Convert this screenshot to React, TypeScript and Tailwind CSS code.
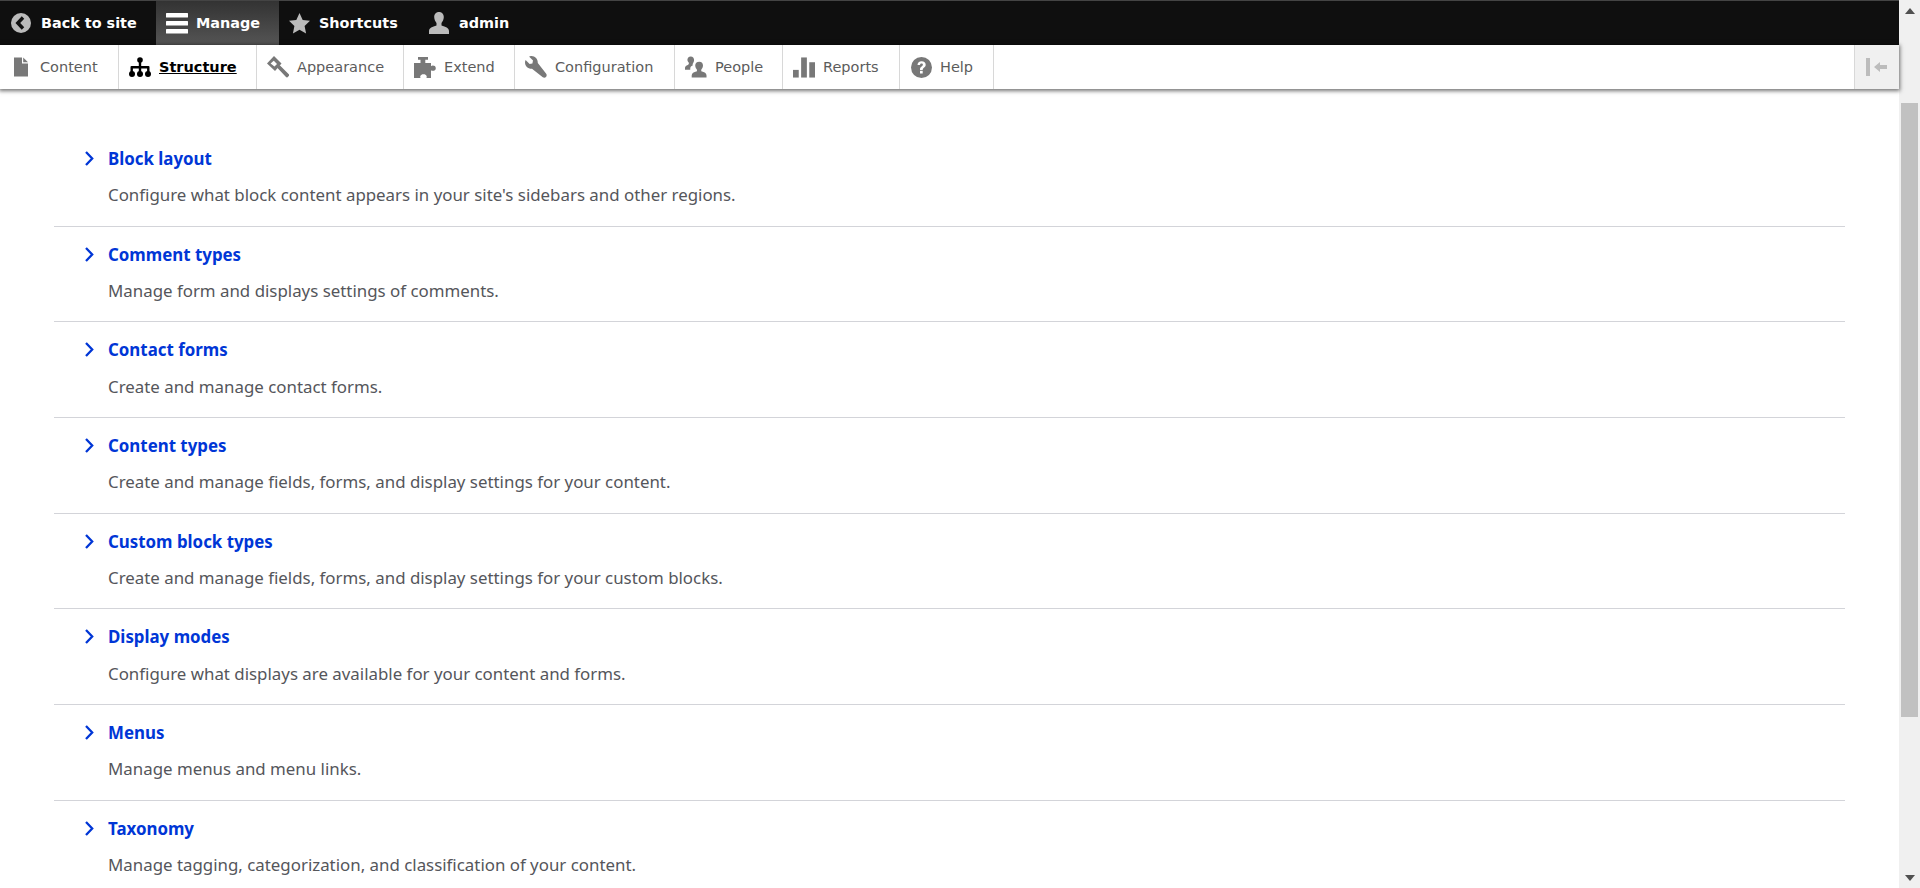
const nav = [
  { label: "Content", w: "w-[119px]", icon: "content" },
  { label: "Structure", w: "w-[138px]", icon: "structure", active: true },
  { label: "Appearance", w: "w-[147px]", icon: "appearance" },
  { label: "Extend", w: "w-[111px]", icon: "extend" },
  { label: "Configuration", w: "w-[160px]", icon: "configuration" },
  { label: "People", w: "w-[108px]", icon: "people" },
  { label: "Reports", w: "w-[117px]", icon: "reports" },
  { label: "Help", w: "w-[94px]", icon: "help" },
];

function Icon({ name, color }: { name: string; color: string }) {
  switch (name) {
    case "content":
      return (
        <svg width="22" height="20" viewBox="0 0 22 20" fill={color}>
          <path d="M4 0.500h8v6h6v13H4z" />
          <path d="M13.200 0.500 18 5.300h-4.800z" />
        </svg>
      );
    case "structure":
      return (
        <svg width="22" height="21" viewBox="0 0 22 21" fill={color}>
          <circle cx="11" cy="3" r="2.800" />
          <path d="M9.800 5h2.400v4h7.300a1 1 0 0 1 1 1v5h-2.400v-3.600h-5.900V15H9.800v-3.600H3.900V15H1.500v-5a1 1 0 0 1 1-1h7.300z" />
          <circle cx="3" cy="17" r="3" />
          <circle cx="11" cy="17" r="3" />
          <circle cx="19" cy="17" r="3" />
        </svg>
      );
    case "appearance":
      return (
        <svg width="22" height="22" viewBox="0 0 22 22" fill={color}>
          <path d="M7 0l7.500 7.500L8 15 0 7.500z" />
          <path d="M6.800 4.800 10 8 7.500 10.500 3.600 7.400z" fill="#fff" />
          <path d="M10 11.500l2.500-2.500 9.300 9.300c.5.500.5 1 .2 1.500l-1.500 1.500c-.5.300-1 .3-1.500-.2z" />
        </svg>
      );
    case "extend":
      return (
        <svg width="22" height="21" viewBox="0 0 22 21" fill={color}>
          <path d="M4 0h10v2.800h-2.700V6H17v3.200c1-1 4.800-1 4.800 2s-3.800 3-4.800 2V21h-4.600c.8-1.200.4-3.800-2.900-3.800S5.800 19.800 6.600 21H0V6h6.500V2.800H4z" />
        </svg>
      );
    case "configuration":
      return (
        <svg width="22" height="22" viewBox="0 0 22 22" fill={color}>
          <path d="M6.500 0c-1 0-2 .3-2.500.6l4 4-.6 2.800-2.800.6-4-4C.2 4.700 0 5.500 0 6.500 0 10 3 13 7 12.800l10.800 8.400c1 .7 2.300.6 3.200-.2.800-.9.900-2.200.2-3.200L12.800 7C13 3 10 0 6.500 0z" />
        </svg>
      );
    case "people":
      return (
        <svg width="23" height="22" viewBox="0 0 23 22" fill={color}>
          <path d="M6 0c2.200 0 3.500 1.700 3.500 3.800 0 1.800-1 3.200-1.500 4v1.700c-1.500.5-2.500 1.500-2.500 3v1.500H0v-2c0-1.500 1-2.500 3-3.200l1-1V6.500C3 5.500 2.500 4.700 2.500 3.800 2.500 1.700 3.800 0 6 0z" />
          <path d="M15 5.500c2.400 0 3.800 1.800 3.800 4 0 2-1 3.300-1.800 4.300v1.700c3.500 1 5.500 2 5.500 4.500v2H7v-2c0-2.500 2-3.500 5.500-4.500v-1.700c-.8-1-1.800-2.300-1.800-4.300 0-2.200 1.400-4 4.300-4z" />
        </svg>
      );
    case "reports":
      return (
        <svg width="23" height="21" viewBox="0 0 23 21" fill={color}>
          <rect x="0" y="13" width="6" height="8" />
          <rect x="8.500" y="0" width="6" height="21" />
          <rect x="17" y="5" width="6" height="16" />
        </svg>
      );
    case "help":
      return (
        <svg width="21" height="21" viewBox="0 0 21 21">
          <circle cx="10.500" cy="10.500" r="10.500" fill={color} />
          <path d="M6.500 8c0-2.300 1.700-3.700 4.100-3.700 2.500 0 4.100 1.500 4.100 3.400 0 3-3 2.700-3 5.300H9c-.2-3.700 2.900-3.300 2.900-5.200 0-.8-.5-1.300-1.400-1.300-1 0-1.500.6-1.500 1.500z" fill="#fff" />
          <rect x="9" y="13.800" width="2.700" height="2.700" fill="#fff" />
        </svg>
      );
  }
  return null;
}

const items = [
  ["Block layout", "Configure what block content appears in your site's sidebars and other regions."],
  ["Comment types", "Manage form and displays settings of comments."],
  ["Contact forms", "Create and manage contact forms."],
  ["Content types", "Create and manage fields, forms, and display settings for your content."],
  ["Custom block types", "Create and manage fields, forms, and display settings for your custom blocks."],
  ["Display modes", "Configure what displays are available for your content and forms."],
  ["Menus", "Manage menus and menu links."],
  ["Taxonomy", "Manage tagging, categorization, and classification of your content."],
];

export default function App() {
  return (
    <div className="flex h-[888px] w-full overflow-hidden bg-white">
      <div className="flex min-w-0 flex-1 flex-col">
        <div className="flex h-[45px] shrink-0 items-center border-t border-t-[#444] bg-[#0f0f0f] font-['DejaVu_Sans',sans-serif] text-[14.4px] font-bold text-white">
          <div className="flex h-full w-[156px] items-center pl-[11px]">
            <svg width="20" height="20" viewBox="0 0 20 20">
              <circle cx="10" cy="10" r="10" fill="#bbb" />
              <path d="M12 4.500 6.800 10l5.200 5.500" fill="none" stroke="#111" strokeWidth="3.400" />
            </svg>
            <span className="ml-[10px] pt-[2px]">Back to site</span>
          </div>
          <div className="flex h-full w-[123px] items-center bg-gradient-to-b from-[#333] to-[#555] pl-[10px]">
            <svg width="22" height="21" viewBox="0 0 22 21" fill="#fff">
              <rect width="22" height="4.500" rx="0.500" />
              <rect y="8" width="22" height="4.500" rx="0.500" />
              <rect y="16" width="22" height="4.500" rx="0.500" />
            </svg>
            <span className="ml-[8px] pt-[2px]">Manage</span>
          </div>
          <div className="flex h-full w-[140px] items-center pl-[10px]">
            <svg width="21" height="21" viewBox="0 0 21 21" fill="#bbb">
              <path d="m10.500 0 3.200 6.900 7.300.9-5.400 5.100 1.500 7.600-6.600-3.700-6.600 3.700 1.500-7.600L0 7.800l7.300-.9z" />
            </svg>
            <span className="ml-[9px] pt-[2px]">Shortcuts</span>
          </div>
          <div className="flex h-full items-center pl-[9px]">
            <svg width="22" height="22" viewBox="0 0 22 22" fill="#bbb">
              <path d="M11 0c3 0 4.800 2.200 4.800 5 0 2.500-1.200 4.500-2.300 6v2.500c4 1.200 7.500 2.500 7.500 5.500v3H1v-3c0-3 3.500-4.300 7.500-5.500V11C7.400 9.500 6.200 7.500 6.200 5 6.200 2.200 8 0 11 0z" />
            </svg>
            <span className="ml-[9px] pt-[2px]">admin</span>
          </div>
        </div>
        <div className="relative z-10 flex h-[44px] shrink-0 items-stretch bg-white font-['DejaVu_Sans',sans-serif] text-[14.5px] text-[#5c5c5c] shadow-[0_1px_4px_1px_rgba(0,0,0,0.55)]">
          {nav.map((n) => (
            <div
              key={n.label}
              className={`flex items-center gap-[8px] border-r border-[#d8d8d8] pl-[10px] ${n.w} ${n.active ? "font-bold text-black" : ""}`}
            >
              <span className="flex w-[22px] shrink-0 justify-center">
                <Icon name={n.icon} color={n.active ? "#000" : "#787878"} />
              </span>
              <span className={n.active ? "pt-[2px] underline" : "pt-[2px]"}>{n.label}</span>
            </div>
          ))}
          <div className="ml-auto flex w-[45px] items-center justify-center border-l border-[#d8d8d8] bg-[#f0f0f0]">
            <svg width="22" height="18" viewBox="0 0 22 18" fill="#bcbcbc">
              <rect width="4" height="18" />
              <path d="M8 9l6-5v3h7v4h-7v3z" />
            </svg>
          </div>
        </div>
        <div className="min-h-0 flex-1 overflow-hidden px-[54px] pt-[42px] font-['Noto_Sans',sans-serif] text-[16.87px]">
          {items.map(([t, d], i) => (
            <div key={t} className={`h-[95.67px] pt-[15px] ${i < 7 ? "border-b border-[#d3d4d9]" : ""}`}>
              <div className="flex items-center">
                <svg width="12" height="17" viewBox="0 0 12 17" className="ml-[30px]" fill="none" stroke="#0036d6" strokeWidth="2.300">
                  <path d="m2 2 6.200 6.500L2 15" />
                </svg>
                <span className="ml-[12px] font-bold text-[#0036d6]">{t}</span>
              </div>
              <p className="mt-[11px] ml-[54px] text-[#55565b]">{d}</p>
            </div>
          ))}
        </div>
      </div>
      <div className="flex w-[21px] shrink-0 flex-col items-center bg-[#f0f0f0]">
        <div className="flex h-[21px] w-full items-center justify-center">
          <svg width="10" height="6" viewBox="0 0 10 6" fill="#505050"><path d="M5 0l5 6H0z" /></svg>
        </div>
        <div className="mt-[82px] h-[614px] w-[17px] bg-[#c1c1c1]" />
        <div className="mt-auto flex h-[21px] w-full items-center justify-center">
          <svg width="10" height="6" viewBox="0 0 10 6" fill="#505050"><path d="M5 6 0 0h10z" /></svg>
        </div>
      </div>
    </div>
  );
}
